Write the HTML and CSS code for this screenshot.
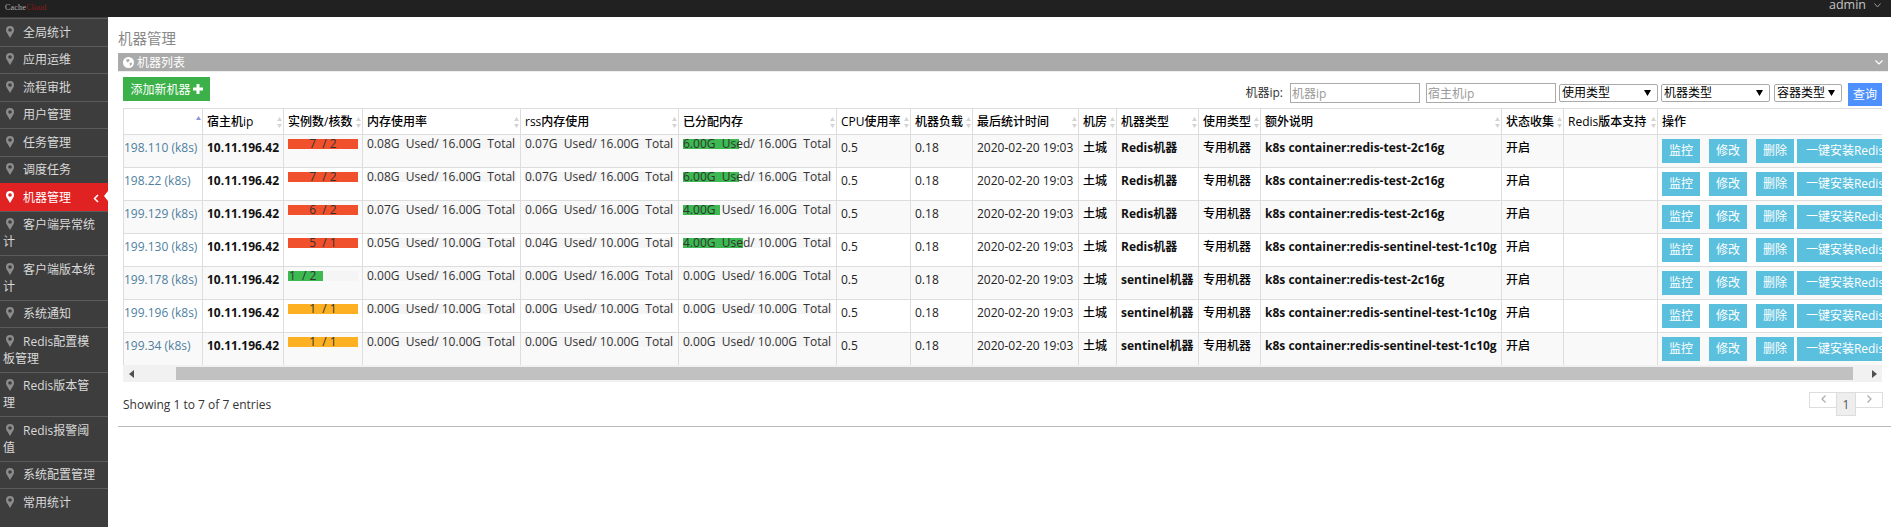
FILE: index.html
```html
<!DOCTYPE html>
<html lang="zh">
<head>
<meta charset="utf-8">
<title>机器管理</title>
<link rel="stylesheet" href="styles.css">
</head>
<body>
<svg class="defs" width="0" height="0" aria-hidden="true">
  <symbol id="pin" viewBox="0 0 8 12"><path fill-rule="evenodd" d="M4 0a4 4 0 0 1 4 4c0 1.100-.3 1.800-.7 2.600L4 12 .7 6.600C.3 5.800 0 5.100 0 4a4 4 0 0 1 4-4zm0 2.200a1.800 1.800 0 1 0 0 3.600 1.800 1.800 0 0 0 0-3.600z"/></symbol>
  <symbol id="sort" viewBox="0 0 5 11"><path d="M2.500 0 5 4H0zM0 7h5l-2.500 4z"/></symbol>
</svg>
<header class="navbar">
  <div class="logo">Cache<span class="logo-red">Cloud</span></div>
  <div class="user">admin
    <svg class="user-caret" width="7" height="5" viewBox="0 0 7 5"><path d="M.5.500 3.500 4 6.500.500" fill="none" stroke="#999"/></svg>
  </div>
</header>
<div class="layout">
  <nav class="sidebar">
    <a class="nav-item"><svg class="pin"><use href="#pin"/></svg>全局统计</a>
    <a class="nav-item"><svg class="pin"><use href="#pin"/></svg>应用运维</a>
    <a class="nav-item"><svg class="pin"><use href="#pin"/></svg>流程审批</a>
    <a class="nav-item"><svg class="pin"><use href="#pin"/></svg>用户管理</a>
    <a class="nav-item"><svg class="pin"><use href="#pin"/></svg>任务管理</a>
    <a class="nav-item"><svg class="pin"><use href="#pin"/></svg>调度任务</a>
    <a class="nav-item active"><svg class="pin"><use href="#pin"/></svg>机器管理
      <svg class="active-caret" width="6" height="9" viewBox="0 0 6 9"><path d="M5 1 1.500 4.500 5 8" fill="none" stroke="#fff" stroke-width="1.500"/></svg>
      <span class="active-notch"></span>
    </a>
    <a class="nav-item"><svg class="pin"><use href="#pin"/></svg>客户端异常统计</a>
    <a class="nav-item"><svg class="pin"><use href="#pin"/></svg>客户端版本统计</a>
    <a class="nav-item"><svg class="pin"><use href="#pin"/></svg>系统通知</a>
    <a class="nav-item"><svg class="pin"><use href="#pin"/></svg>Redis配置模板管理</a>
    <a class="nav-item"><svg class="pin"><use href="#pin"/></svg>Redis版本管理</a>
    <a class="nav-item"><svg class="pin"><use href="#pin"/></svg>Redis报警阈值</a>
    <a class="nav-item"><svg class="pin"><use href="#pin"/></svg>系统配置管理</a>
    <a class="nav-item"><svg class="pin"><use href="#pin"/></svg>常用统计</a>
  </nav>
  <main class="content">
    <h3 class="page-title">机器管理</h3>
    <section class="panel">
      <div class="panel-head">
        <div class="panel-title">
          <svg class="globe" width="11" height="11" viewBox="0 0 11 11"><circle cx="5.500" cy="5.500" r="5.500" fill="#fff"/><path d="M3 2.500 6 2l.5 2-2 1.500L3.500 4zM6.500 6 9 5.500 8.500 8 7 9z" fill="#aaa"/></svg>
          机器列表
        </div>
        <svg class="panel-caret" width="8" height="5" viewBox="0 0 8 5"><path d="M.5.500 4 4 7.500.500" fill="none" stroke="#fff" stroke-width="1.200"/></svg>
      </div>
      <div class="toolbar">
        <button class="btn-add">添加新机器
          <svg width="10" height="10" viewBox="0 0 10 10"><path d="M3.500 0h3v3.500H10v3H6.500V10h-3V6.500H0v-3h3.500z" fill="#fff"/></svg>
        </button>
        <form class="filters">
          <label class="filter-label">机器ip:</label>
          <input class="filter-input" placeholder="机器ip">
          <input class="filter-input" placeholder="宿主机ip">
          <select class="filter-select sel-use"><option>使用类型</option></select>
          <select class="filter-select sel-type"><option>机器类型</option></select>
          <select class="filter-select sel-box"><option>容器类型</option></select>
          <button class="btn-search" type="button">查询</button>
        </form>
      </div>
      <div class="table-wrap">
        <table class="grid">
          <colgroup>
            <col class="c1"><col class="c2"><col class="c3"><col class="c4"><col class="c4"><col class="c4"><col class="c7"><col class="c8"><col class="c9"><col class="c10"><col class="c11"><col class="c8"><col class="c13"><col class="c8"><col class="c15"><col class="c16">
          </colgroup>
          <thead>
            <tr>
              <th class="sorted"><svg class="sort-asc" viewBox="0 0 5 4"><path d="M2.500 0 5 4H0z"/></svg></th>
              <th>宿主机ip<svg class="sort"><use href="#sort"/></svg></th>
              <th>实例数/核数<svg class="sort"><use href="#sort"/></svg></th>
              <th>内存使用率<svg class="sort"><use href="#sort"/></svg></th>
              <th>rss内存使用<svg class="sort"><use href="#sort"/></svg></th>
              <th>已分配内存<svg class="sort"><use href="#sort"/></svg></th>
              <th>CPU使用率<svg class="sort"><use href="#sort"/></svg></th>
              <th>机器负载<svg class="sort"><use href="#sort"/></svg></th>
              <th>最后统计时间<svg class="sort"><use href="#sort"/></svg></th>
              <th>机房<svg class="sort"><use href="#sort"/></svg></th>
              <th>机器类型<svg class="sort"><use href="#sort"/></svg></th>
              <th>使用类型<svg class="sort"><use href="#sort"/></svg></th>
              <th>额外说明<svg class="sort"><use href="#sort"/></svg></th>
              <th>状态收集<svg class="sort"><use href="#sort"/></svg></th>
              <th>Redis版本支持<svg class="sort"><use href="#sort"/></svg></th>
              <th>操作</th>
            </tr>
          </thead>
          <tbody>
            <tr>
              <td class="ip"><a>198.110 (k8s)</a></td><td class="b">10.11.196.42</td>
              <td><div class="bar center"><div class="fill red" style="width:100%"></div><span>7&nbsp; /&nbsp;2</span></div></td>
              <td><div class="bar"><span>0.08G&nbsp; Used/ 16.00G&nbsp; Total</span></div></td>
              <td><div class="bar"><span>0.07G&nbsp; Used/ 16.00G&nbsp; Total</span></div></td>
              <td><div class="bar"><div class="fill green" style="width:37.5%"></div><span>6.00G&nbsp; Used/ 16.00G&nbsp; Total</span></div></td>
              <td class="mid">0.5</td><td class="mid">0.18</td><td class="mid">2020-02-20 19:03</td><td class="cn">土城</td><td class="b">Redis机器</td><td class="cn">专用机器</td><td class="b">k8s container:redis-test-2c16g</td><td class="cn">开启</td><td></td>
              <td><a class="op">监控</a><a class="op">修改</a><a class="op">删除</a><a class="op wide">一键安装Redis</a></td>
            </tr>
            <tr>
              <td class="ip"><a>198.22 (k8s)</a></td><td class="b">10.11.196.42</td>
              <td><div class="bar center"><div class="fill red" style="width:100%"></div><span>7&nbsp; /&nbsp;2</span></div></td>
              <td><div class="bar"><span>0.08G&nbsp; Used/ 16.00G&nbsp; Total</span></div></td>
              <td><div class="bar"><span>0.07G&nbsp; Used/ 16.00G&nbsp; Total</span></div></td>
              <td><div class="bar"><div class="fill green" style="width:37.5%"></div><span>6.00G&nbsp; Used/ 16.00G&nbsp; Total</span></div></td>
              <td class="mid">0.5</td><td class="mid">0.18</td><td class="mid">2020-02-20 19:03</td><td class="cn">土城</td><td class="b">Redis机器</td><td class="cn">专用机器</td><td class="b">k8s container:redis-test-2c16g</td><td class="cn">开启</td><td></td>
              <td><a class="op">监控</a><a class="op">修改</a><a class="op">删除</a><a class="op wide">一键安装Redis</a></td>
            </tr>
            <tr>
              <td class="ip"><a>199.129 (k8s)</a></td><td class="b">10.11.196.42</td>
              <td><div class="bar center"><div class="fill red" style="width:100%"></div><span>6&nbsp; /&nbsp;2</span></div></td>
              <td><div class="bar"><span>0.07G&nbsp; Used/ 16.00G&nbsp; Total</span></div></td>
              <td><div class="bar"><span>0.06G&nbsp; Used/ 16.00G&nbsp; Total</span></div></td>
              <td><div class="bar"><div class="fill green" style="width:25%"></div><span>4.00G&nbsp; Used/ 16.00G&nbsp; Total</span></div></td>
              <td class="mid">0.5</td><td class="mid">0.18</td><td class="mid">2020-02-20 19:03</td><td class="cn">土城</td><td class="b">Redis机器</td><td class="cn">专用机器</td><td class="b">k8s container:redis-test-2c16g</td><td class="cn">开启</td><td></td>
              <td><a class="op">监控</a><a class="op">修改</a><a class="op">删除</a><a class="op wide">一键安装Redis</a></td>
            </tr>
            <tr>
              <td class="ip"><a>199.130 (k8s)</a></td><td class="b">10.11.196.42</td>
              <td><div class="bar center"><div class="fill red" style="width:100%"></div><span>5&nbsp; /&nbsp;1</span></div></td>
              <td><div class="bar"><span>0.05G&nbsp; Used/ 10.00G&nbsp; Total</span></div></td>
              <td><div class="bar"><span>0.04G&nbsp; Used/ 10.00G&nbsp; Total</span></div></td>
              <td><div class="bar"><div class="fill green" style="width:40%"></div><span>4.00G&nbsp; Used/ 10.00G&nbsp; Total</span></div></td>
              <td class="mid">0.5</td><td class="mid">0.18</td><td class="mid">2020-02-20 19:03</td><td class="cn">土城</td><td class="b">Redis机器</td><td class="cn">专用机器</td><td class="b">k8s container:redis-sentinel-test-1c10g</td><td class="cn">开启</td><td></td>
              <td><a class="op">监控</a><a class="op">修改</a><a class="op">删除</a><a class="op wide">一键安装Redis</a></td>
            </tr>
            <tr>
              <td class="ip"><a>199.178 (k8s)</a></td><td class="b">10.11.196.42</td>
              <td><div class="bar left"><div class="fill green" style="width:50%"></div><span>1&nbsp; /&nbsp;2</span></div></td>
              <td><div class="bar"><span>0.00G&nbsp; Used/ 16.00G&nbsp; Total</span></div></td>
              <td><div class="bar"><span>0.00G&nbsp; Used/ 16.00G&nbsp; Total</span></div></td>
              <td><div class="bar"><span>0.00G&nbsp; Used/ 16.00G&nbsp; Total</span></div></td>
              <td class="mid">0.5</td><td class="mid">0.18</td><td class="mid">2020-02-20 19:03</td><td class="cn">土城</td><td class="b">sentinel机器</td><td class="cn">专用机器</td><td class="b">k8s container:redis-test-2c16g</td><td class="cn">开启</td><td></td>
              <td><a class="op">监控</a><a class="op">修改</a><a class="op">删除</a><a class="op wide">一键安装Redis</a></td>
            </tr>
            <tr>
              <td class="ip"><a>199.196 (k8s)</a></td><td class="b">10.11.196.42</td>
              <td><div class="bar center"><div class="fill orange" style="width:100%"></div><span>1&nbsp; /&nbsp;1</span></div></td>
              <td><div class="bar"><span>0.00G&nbsp; Used/ 10.00G&nbsp; Total</span></div></td>
              <td><div class="bar"><span>0.00G&nbsp; Used/ 10.00G&nbsp; Total</span></div></td>
              <td><div class="bar"><span>0.00G&nbsp; Used/ 10.00G&nbsp; Total</span></div></td>
              <td class="mid">0.5</td><td class="mid">0.18</td><td class="mid">2020-02-20 19:03</td><td class="cn">土城</td><td class="b">sentinel机器</td><td class="cn">专用机器</td><td class="b">k8s container:redis-sentinel-test-1c10g</td><td class="cn">开启</td><td></td>
              <td><a class="op">监控</a><a class="op">修改</a><a class="op">删除</a><a class="op wide">一键安装Redis</a></td>
            </tr>
            <tr>
              <td class="ip"><a>199.34 (k8s)</a></td><td class="b">10.11.196.42</td>
              <td><div class="bar center"><div class="fill orange" style="width:100%"></div><span>1&nbsp; /&nbsp;1</span></div></td>
              <td><div class="bar"><span>0.00G&nbsp; Used/ 10.00G&nbsp; Total</span></div></td>
              <td><div class="bar"><span>0.00G&nbsp; Used/ 10.00G&nbsp; Total</span></div></td>
              <td><div class="bar"><span>0.00G&nbsp; Used/ 10.00G&nbsp; Total</span></div></td>
              <td class="mid">0.5</td><td class="mid">0.18</td><td class="mid">2020-02-20 19:03</td><td class="cn">土城</td><td class="b">sentinel机器</td><td class="cn">专用机器</td><td class="b">k8s container:redis-sentinel-test-1c10g</td><td class="cn">开启</td><td></td>
              <td><a class="op">监控</a><a class="op">修改</a><a class="op">删除</a><a class="op wide">一键安装Redis</a></td>
            </tr>
          </tbody>
        </table>
      </div>
      <div class="hscroll">
        <div class="sb-left"><svg width="5" height="8" viewBox="0 0 5 8"><path d="M5 0v8L0 4z" fill="#505050"/></svg></div>
        <div class="sb-thumb"></div>
        <div class="sb-right"><svg width="5" height="8" viewBox="0 0 5 8"><path d="M0 0v8l5-4z" fill="#505050"/></svg></div>
      </div>
      <div class="table-foot">
        <div class="info">Showing 1 to 7 of 7 entries</div>
        <div class="pager">
          <a class="page-arrow"><svg width="5" height="8" viewBox="0 0 5 8"><path d="M4.500.500 1 4l3.500 3.500" fill="none" stroke="#aaa" stroke-width="1.200"/></svg></a>
          <a class="page-cur">1</a>
          <a class="page-arrow"><svg width="5" height="8" viewBox="0 0 5 8"><path d="M.5.500 4 4 .5 7.500" fill="none" stroke="#aaa" stroke-width="1.200"/></svg></a>
        </div>
      </div>
    </section>
    <hr class="rule">
  </main>
</div>
</body>
</html>
```
FILE: styles.css
```css
* { box-sizing: border-box; }
html, body { margin: 0; height: 527px; overflow: hidden; }
body {
  font: 12px/17px "Open Sans", "Noto Sans CJK SC", sans-serif;
  color: #333;
  background: #fff;
}
.defs { position: absolute; }

.navbar {
  height: 17px;
  background: #212121;
  display: flex;
  justify-content: space-between;
  overflow: hidden;
}
.logo {
  font: 8px/15px "Liberation Serif", serif;
  color: #b5b5b5;
  padding-left: 5px;
  letter-spacing: .2px;
}
.logo-red { color: #8c1a1a; }
.user {
  color: #c4c4c4;
  font-size: 12.5px;
  line-height: 10px;
  padding-right: 10px;
  display: flex;
  align-items: flex-start;
  gap: 8px;
}
.user-caret { margin-top: 3px; }

.layout { display: flex; height: 510px; }

.sidebar {
  width: 108px;
  flex: none;
  background: #3d3d3d;
  padding-top: 1px;
}
.nav-item {
  display: block;
  position: relative;
  padding: 4.75px 12.5px 4.75px 3px;
  border-top: 1px solid #5b5b5b;
  color: #d9d9d9;
  line-height: 17px;
}
.pin {
  width: 8px;
  height: 12px;
  margin: 0 9px 0 3px;
  vertical-align: -1px;
  fill: #8c8c8c;
}
.nav-item.active {
  background: #e02222;
  border-top-color: #e02222;
  color: #fff;
}
.active .pin { fill: #fff; }
.active-caret { position: absolute; right: 9px; top: 10px; }
.active-notch {
  position: absolute;
  right: 0;
  top: 7px;
  border: 5px solid transparent;
  border-right: 4px solid #fff;
  border-left: 0;
}

.content {
  flex: 1;
  min-width: 0;
  padding: 0 0 0 10px;
}
.page-title {
  margin: 0;
  height: 36px;
  padding-top: 13px;
  font-size: 14.5px;
  line-height: 18px;
  font-weight: 400;
  color: #888;
}
.panel { margin-right: 3px; }
.panel-head {
  height: 19px;
  background: #aaa;
  border-bottom: 1px solid #eee;
  display: flex;
  align-items: center;
  justify-content: space-between;
  color: #fff;
  padding: 0 5px 0 5px;
}
.panel-title { display: flex; align-items: center; gap: 3px; }
.toolbar {
  height: 36px;
  padding: 0 6px 0 5px;
  display: flex;
  justify-content: space-between;
  align-items: flex-start;
}
.btn-add {
  margin-top: 5px;
  width: 87px;
  height: 24px;
  border: 0;
  padding: 0;
  background: #3cb14a;
  color: #fff;
  font: inherit;
  display: flex;
  align-items: center;
  justify-content: center;
  gap: 2px;
}
.filters {
  margin: 11px 0 0;
  display: flex;
  align-items: flex-start;
}
.filter-label { color: #333; line-height: 19px; margin-right: 7px; }
.filter-input {
  width: 130px;
  height: 20px;
  margin-right: 6px;
  border: 1px solid #aaa;
  padding: 0 1px;
  font: inherit;
  background: #fff;
}
.filter-input + .filter-input { margin-right: 3px; }
.filter-input::placeholder { color: #999; opacity: 1; }
.filter-select {
  appearance: none;
  height: 18px;
  margin: 1px 3px 0 0;
  padding: 0 0 0 2px;
  border: 1px solid #aaa;
  border-radius: 2px;
  font: inherit;
  line-height: 16px;
  color: #000;
  background: #fff url("data:image/svg+xml,%3Csvg xmlns='http://www.w3.org/2000/svg' width='7' height='6'%3E%3Cpath d='M0 0h7L3.500 6z'/%3E%3C/svg%3E") no-repeat right 6px top 5px;
}
.sel-use { width: 99px; }
.sel-type { width: 109px; margin-right: 4px; }
.sel-box { width: 68px; margin-right: 6px; }
.btn-search {
  width: 34px;
  height: 23px;
  border: 0;
  padding: 0;
  background: #4d90fe;
  color: #fff;
  font: inherit;
}

.table-wrap { margin: 0 6px 0 5px; height: 257px; overflow: hidden; }
.grid {
  table-layout: fixed;
  width: 1760px;
  border-collapse: collapse;
}
.c1 { width: 79px; }
.c2 { width: 81px; }
.c3 { width: 79px; }
.c4 { width: 158px; }
.c7 { width: 74px; }
.c8 { width: 62px; }
.c9 { width: 106px; }
.c10 { width: 38px; }
.c11 { width: 82px; }
.c13 { width: 241px; }
.c15 { width: 94px; }
.c16 { width: 225px; }
.grid th, .grid td {
  border: 1px solid #ddd;
  padding: 4px;
  text-align: left;
  vertical-align: top;
  white-space: nowrap;
  overflow: hidden;
}
.grid th {
  height: 26px;
  padding-top: 4px;
  font-weight: 500;
  color: #000;
  background: #fff;
  position: relative;
}
.sort {
  position: absolute;
  right: 1px;
  top: 8px;
  width: 5px;
  height: 11px;
  fill: #d4d4d4;
}
.sort-asc {
  position: absolute;
  right: 1px;
  top: 7px;
  width: 5px;
  height: 4px;
  fill: #8f95d6;
}
.grid td { height: 33px; color: #333; }
.grid tbody tr:nth-child(odd) td { background: #f9f9f9; }
.grid td.b { font-weight: 700; color: #111; }
.grid td.mid { color: #222; }
.grid td.cn { color: #000; font-weight: 500; }
.grid td.ip { padding-left: 0; }
.ip a { color: #4f7f9f; }

.bar {
  position: relative;
  height: 10px;
  line-height: 10px;
  background: #f5f5f5;
  overflow: visible;
  white-space: nowrap;
  color: #333;
}
.bar span { position: relative; }
.bar.center { text-align: center; }
.bar.left { padding-left: 1px; }
.fill { position: absolute; left: 0; top: 0; height: 10px; }
.fill.red { background: #f0502c; }
.fill.green { background: #3cb950; }
.fill.orange { background: #fdb122; }

.op {
  display: inline-block;
  width: 38px;
  height: 24px;
  margin-right: 9px;
  background: #5bc0de;
  color: #fff;
  line-height: 24px;
  text-align: center;
  vertical-align: top;
}
.op:nth-child(3) { margin-right: 3px; }
.op.wide { width: 96px; margin-right: 0; }

.hscroll {
  margin: 0 6px 0 5px;
  height: 17px;
  background: #f1f1f1;
  display: flex;
}
.sb-left { width: 53px; padding-left: 6px; display: flex; align-items: center; }
.sb-thumb { flex: 1; margin: 2px 0; background: #c1c1c1; }
.sb-right { width: 29px; padding-left: 19px; display: flex; align-items: center; }

.table-foot {
  height: 44px;
  margin: 0 5px 0 5px;
  display: flex;
  justify-content: space-between;
  align-items: flex-start;
}
.info { margin-top: 14px; }
.pager { margin-top: 10px; display: flex; align-items: flex-start; }
.page-arrow {
  width: 28px;
  height: 16px;
  border: 1px solid #ddd;
  display: flex;
  justify-content: center;
  padding-top: 2px;
}
.page-cur {
  width: 20px;
  height: 24px;
  margin: 0 -1px;
  background: #eee;
  border: 1px solid #ddd;
  text-align: center;
  line-height: 24px;
  color: #555;
}
.rule { margin: 0; border: 0; border-top: 1px solid #bbb; }
```
